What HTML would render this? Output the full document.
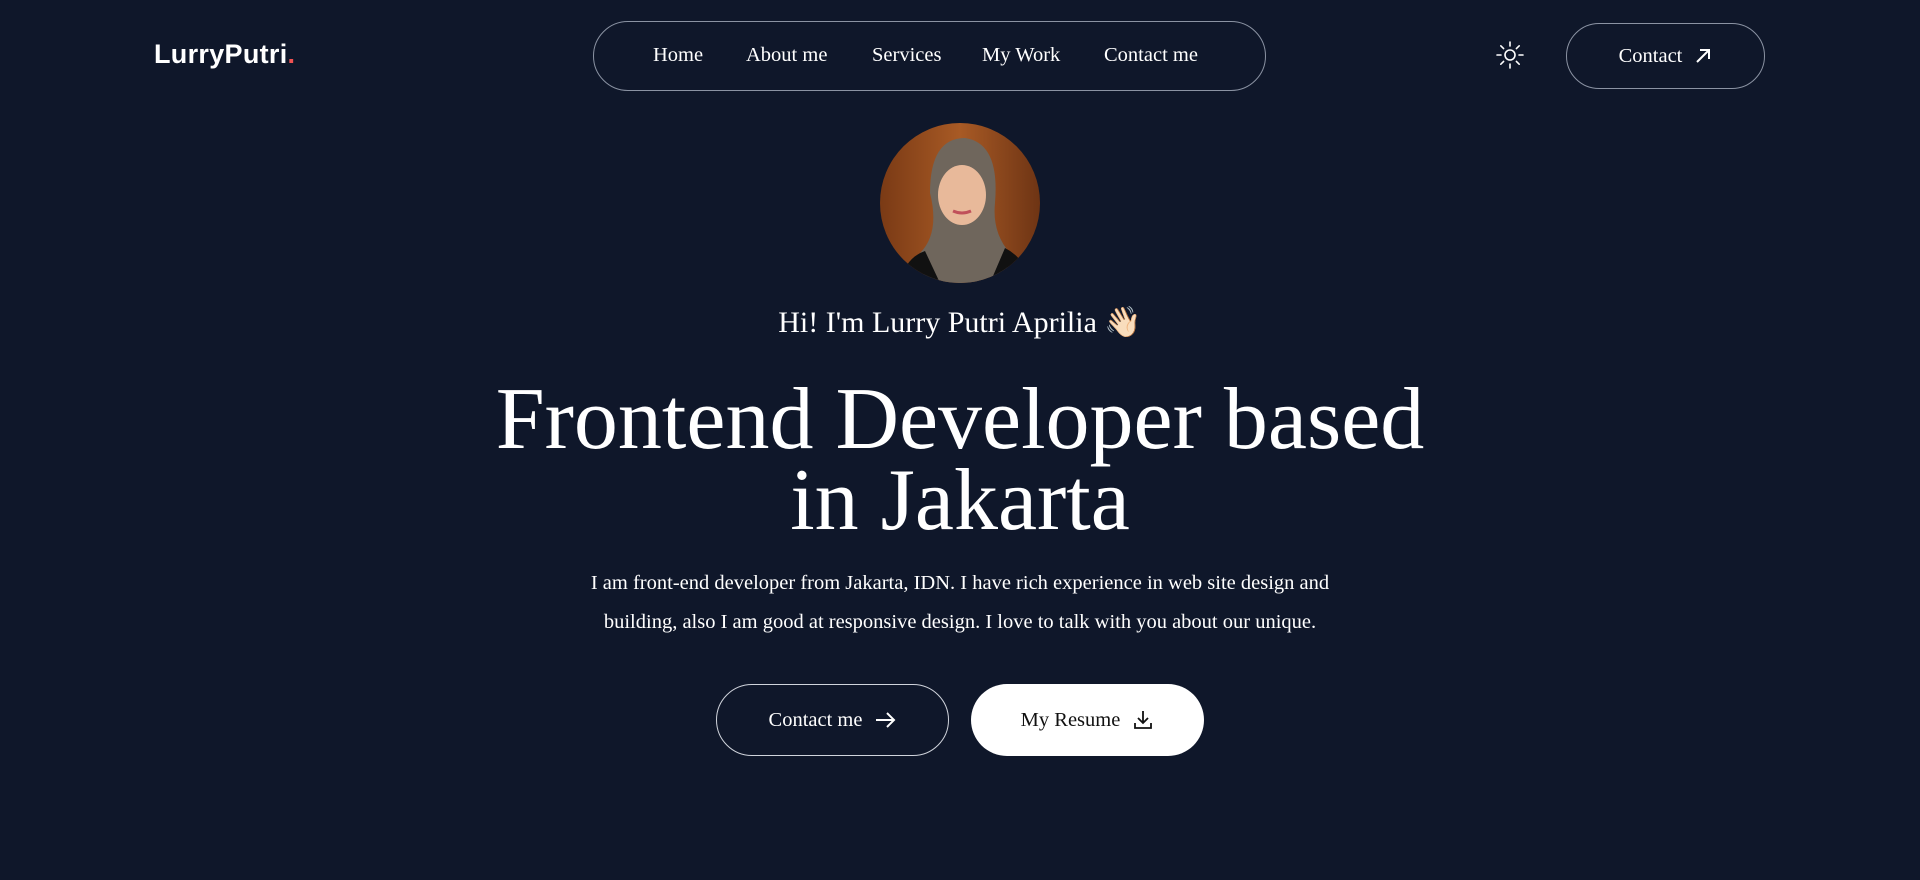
<!DOCTYPE html>
<html><head><meta charset="utf-8"><style>
*{margin:0;padding:0;box-sizing:border-box}
body{width:1920px;height:880px;background:#0f172a;color:#fff;font-family:"Liberation Serif",serif;position:relative;overflow:hidden}
.logo{position:absolute;left:154px;top:39px;font-family:"Liberation Sans",sans-serif;font-weight:bold;font-size:27px;letter-spacing:0.3px}
.logo span{color:#f05252}
.nav{position:absolute;left:593px;top:21px;width:673px;height:70px;border:1.5px solid #8b93a3;border-radius:35px}
.nav a{position:absolute;top:22px;font-size:20.5px;color:#fff;text-decoration:none;white-space:nowrap}
.cbtn{position:absolute;left:1566px;top:23px;width:199px;height:66px;border:1.5px solid #8b93a3;border-radius:33px;font-size:20.5px;display:flex;align-items:center;justify-content:center;gap:12px}
.sun{position:absolute;left:1495px;top:40px}
.avatar{position:absolute;left:880px;top:123px;width:160px;height:160px;border-radius:50%;overflow:hidden}
.hi{position:absolute;left:0;width:1920px;top:305px;text-align:center;font-size:30px}
h1{position:absolute;left:0;width:1920px;top:379px;text-align:center;font-weight:normal;font-size:88px;line-height:81px}
p{position:absolute;left:460px;width:1000px;top:564px;text-align:center;font-size:20.5px;line-height:39px}
.b{position:absolute;top:684px;width:233px;height:72px;border-radius:36px;display:flex;align-items:center;justify-content:center;gap:12px;font-size:20.5px}
.b1{left:716px;border:1.5px solid #d0d4dc}
.b2{left:971px;background:#fff;color:#111}
</style></head><body>
<div class="logo">LurryPutri<span>.</span></div>
<div class="nav">
<a style="left:59px">Home</a><a style="left:152px">About me</a><a style="left:278px">Services</a><a style="left:388px">My Work</a><a style="left:510px">Contact me</a>
</div>
<svg class="sun" width="30" height="30" viewBox="0 0 30 30" stroke="#fff" stroke-width="1.6" fill="none" stroke-linecap="round"><circle cx="15" cy="15" r="5"/><path d="M15 2v4M15 24v4M2 15h4M24 15h4M5.8 5.8l2.8 2.8M21.4 21.4l2.8 2.8M5.8 24.2l2.8-2.8M21.4 8.6l2.8-2.8"/></svg>
<div class="cbtn">Contact <svg width="18" height="18" viewBox="0 0 18 18" stroke="#fff" stroke-width="2" fill="none"><path d="M3 15L15 3M6 3h9v9"/></svg></div>
<div class="avatar"><svg width="160" height="160" viewBox="0 0 160 160">
<defs><linearGradient id="g" x1="0" x2="1"><stop offset="0" stop-color="#7a3a15"/><stop offset=".5" stop-color="#a85a25"/><stop offset="1" stop-color="#6e3414"/></linearGradient></defs>
<rect width="160" height="160" fill="url(#g)"/>
<path d="M45 160 L40 130 Q60 110 50 70 Q50 15 85 15 Q120 20 115 80 Q112 110 130 130 L125 160Z" fill="#6f665c"/>
<ellipse cx="82" cy="72" rx="24" ry="30" fill="#e8b99a"/>
<path d="M20 160 Q25 135 45 128 L60 160Z M125 125 Q145 135 150 160 L110 160Z" fill="#111"/>
<path d="M73 88 Q82 92 91 88" stroke="#c0505a" stroke-width="3" fill="none"/>
</svg></div>
<div class="hi">Hi! I'm Lurry Putri Aprilia 👋🏻</div>
<h1>Frontend Developer based<br>in Jakarta</h1>
<p>I am front-end developer from Jakarta, IDN. I have rich experience in web site design and<br>building, also I am good at responsive design. I love to talk with you about our unique.</p>
<div class="b b1">Contact me <svg width="22" height="18" viewBox="0 0 22 18" stroke="#fff" stroke-width="2" fill="none"><path d="M2 9h18M13 2l7 7-7 7"/></svg></div>
<div class="b b2">My Resume <svg width="22" height="22" viewBox="0 0 22 22" stroke="#111" stroke-width="1.8" fill="none"><path d="M11 2v12M6 9l5 5 5-5M3 14v5h16v-5"/></svg></div>
</body></html>
